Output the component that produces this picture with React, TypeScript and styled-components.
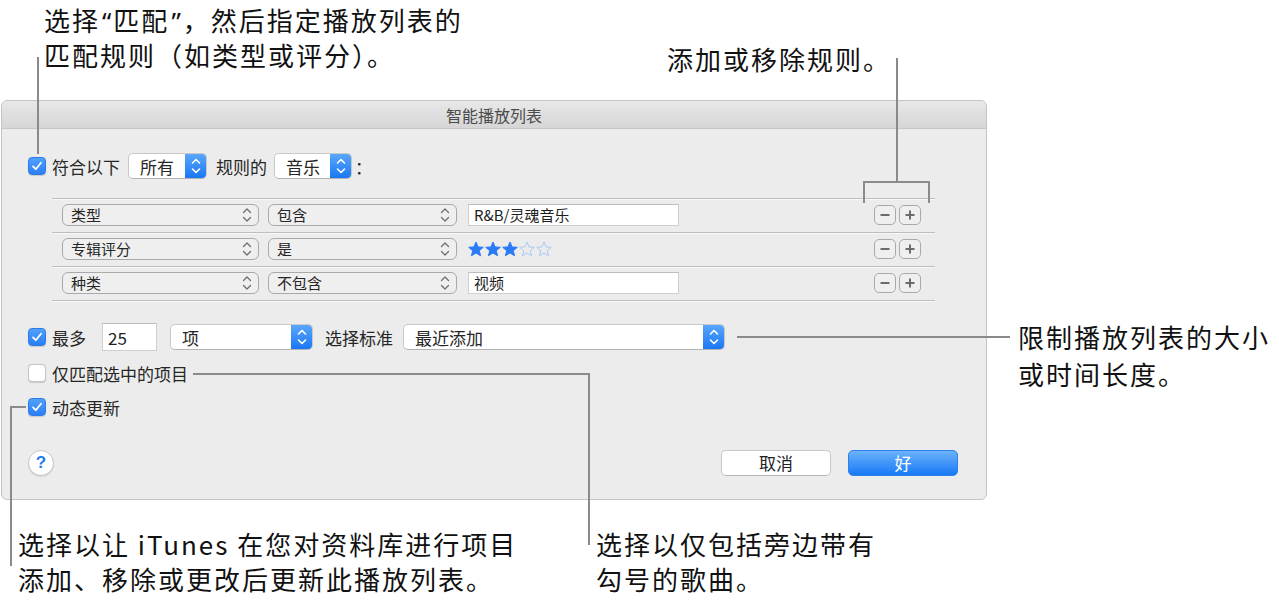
import React from "react";
import styled, { createGlobalStyle, css } from "styled-components";

const GlobalStyle = createGlobalStyle`
  html, body {
    margin: 0;
    padding: 0;
    background: #fff;
  }
  body {
    font-family: "Noto Sans CJK SC", "Noto Sans", sans-serif;
    color: #262626;
  }
`;

const Canvas = styled.div`
  position: relative;
  width: 1279px;
  height: 604px;
  overflow: hidden;
  background: #fff;
  padding: 100px 0 0 1px;
  box-sizing: border-box;
`;

const Dialog = styled.div`
  width: 986px;
  height: 400px;
  box-sizing: border-box;
  border: 1px solid #c4c4c4;
  border-radius: 6px;
  background: #ececec;
  display: flex;
  flex-direction: column;
  overflow: hidden;
`;

const TitleBar = styled.div`
  height: 28px;
  flex: none;
  box-sizing: border-box;
  border-bottom: 1px solid #c6c6c6;
  background: linear-gradient(#e8e8e8, #d6d6d6);
  display: flex;
  align-items: center;
  justify-content: center;
  font-size: 16px;
  line-height: 1;
  color: #4a4a4a;
`;

const Body = styled.div`
  flex: 1;
  display: flex;
  flex-direction: column;
  padding: 0 28px 0 26px;
`;

const Row = styled.div<{ $top: number; $h: number }>`
  display: flex;
  align-items: center;
  margin-top: ${(p) => p.$top}px;
  height: ${(p) => p.$h}px;
  flex: none;
`;

const Label = styled.span<{ $ml?: number }>`
  margin-left: ${(p) => p.$ml ?? 0}px;
  font-size: 17px;
  line-height: 1;
  white-space: nowrap;
  color: #262626;
`;

const Check = styled.span<{ $on?: boolean }>`
  width: 18px;
  height: 18px;
  flex: none;
  box-sizing: border-box;
  border-radius: 4px;
  display: inline-flex;
  align-items: center;
  justify-content: center;
  box-shadow: 0 0.5px 1px rgba(0, 0, 0, 0.15);
  ${(p) =>
    p.$on
      ? css`
          background: linear-gradient(#51a1fb, #2a7ff5);
          border: 1px solid #2d7be6;
        `
      : css`
          background: #fff;
          border: 1px solid #c6c6c6;
        `}
`;

const Popup = styled.div<{ $w: number; $ml?: number }>`
  width: ${(p) => p.$w}px;
  margin-left: ${(p) => p.$ml ?? 0}px;
  height: 26px;
  flex: none;
  box-sizing: border-box;
  background: #fff;
  border: 1px solid #c8c8c8;
  border-bottom-color: #b3b3b3;
  border-radius: 5px;
  display: flex;
  align-items: center;
  padding-left: 11px;
  font-size: 17px;
  line-height: 1;
  color: #262626;
  overflow: hidden;
`;

const Stepper = styled.span`
  margin-left: auto;
  width: 22px;
  align-self: stretch;
  margin-top: -1px;
  margin-bottom: -1px;
  margin-right: -1px;
  background: linear-gradient(#5ca8fc, #1876f3);
  display: flex;
  align-items: center;
  justify-content: center;
`;

const RuleBox = styled.div`
  margin: 19px 0 0 24px;
  width: 883px;
  flex: none;
  border-bottom: 1px solid #bdbdbd;
  box-shadow: 0 1px 0 #f8f8f8;
`;

const RuleRow = styled.div`
  height: 34px;
  box-sizing: border-box;
  border-top: 1px solid #bdbdbd;
  box-shadow: inset 0 1px 0 #f8f8f8;
  display: flex;
  align-items: center;
  padding: 0 14px 2px 10px;
`;

const RulePopup = styled.div<{ $w: number; $ml?: number }>`
  width: ${(p) => p.$w}px;
  margin-left: ${(p) => p.$ml ?? 0}px;
  height: 22px;
  flex: none;
  box-sizing: border-box;
  border: 1px solid #a9a9a9;
  border-radius: 6px;
  background: #efefef;
  display: flex;
  align-items: center;
  justify-content: space-between;
  padding: 0 6px 0 8px;
  font-size: 15px;
  line-height: 1;
  color: #262626;
`;

const Field = styled.div<{ $w: number; $h: number; $ml?: number; $fs: number }>`
  width: ${(p) => p.$w}px;
  height: ${(p) => p.$h}px;
  margin-left: ${(p) => p.$ml ?? 0}px;
  flex: none;
  box-sizing: border-box;
  background: #fff;
  border: 1px solid #cfcfcf;
  border-top-color: #bdbdbd;
  display: flex;
  align-items: center;
  padding-left: 5px;
  font-size: ${(p) => p.$fs}px;
  line-height: 1;
  color: #1e1e1e;
`;

const Stars = styled.div`
  margin-left: 11px;
  display: flex;
  gap: 1px;
`;

const Spacer = styled.div`
  flex: 1;
`;

const SmallButton = styled.span<{ $ml?: number }>`
  width: 22px;
  height: 20px;
  margin-left: ${(p) => p.$ml ?? 0}px;
  box-sizing: border-box;
  border: 1px solid #a9a9a9;
  border-radius: 5px;
  background: #efefef;
  display: inline-flex;
  align-items: center;
  justify-content: center;
`;

const HelpButton = styled.span`
  width: 26px;
  height: 26px;
  box-sizing: border-box;
  border-radius: 50%;
  border: 1px solid #c8c8c8;
  background: #fff;
  box-shadow: 0 1px 1px rgba(0, 0, 0, 0.1);
  display: inline-flex;
  align-items: center;
  justify-content: center;
  font-family: "Liberation Sans", sans-serif;
  font-size: 17px;
  font-weight: bold;
  color: #1f7bf2;
`;

const PushButton = styled.span<{ $primary?: boolean; $ml?: number }>`
  width: 110px;
  height: 26px;
  margin-left: ${(p) => p.$ml ?? 0}px;
  box-sizing: border-box;
  border-radius: 5px;
  display: inline-flex;
  align-items: center;
  justify-content: center;
  font-size: 17px;
  line-height: 1;
  ${(p) =>
    p.$primary
      ? css`
          background: linear-gradient(#6cb1fb, #177af6);
          border: 1px solid #2b80ee;
          color: #fff;
        `
      : css`
          background: #fff;
          border: 1px solid #c8c8c8;
          border-bottom-color: #b5b5b5;
          color: #222;
        `}
`;

const Note = styled.div<{ $x: number; $y: number; $lh: number }>`
  position: absolute;
  left: ${(p) => p.$x}px;
  top: ${(p) => p.$y}px;
  font-size: 26px;
  line-height: ${(p) => p.$lh}px;
  letter-spacing: 2px;
  color: #111;
  white-space: nowrap;
`;

// proportional curly quotes, as in the reference
const Quote = styled.span`
  font-family: "Noto Sans", sans-serif;
  letter-spacing: 0;
  padding: 0 2px;
`;

const Leader = styled.div<{ $x: number; $y: number; $w: number; $h: number }>`
  position: absolute;
  left: ${(p) => p.$x}px;
  top: ${(p) => p.$y}px;
  width: ${(p) => p.$w}px;
  height: ${(p) => p.$h}px;
  background: #8a8a8a;
`;

const Tick = () => (
  <svg width="12" height="12" viewBox="0 0 12 12">
    <path d="M2 6.4 L4.8 9.2 L10 2.8" fill="none" stroke="#fff" strokeWidth="1.8" strokeLinecap="round" strokeLinejoin="round" />
  </svg>
);

const BlueChevrons = () => (
  <svg width="10" height="18" viewBox="0 0 10 18">
    <path d="M1.5 6 L5 2.5 L8.5 6 M1.5 12 L5 15.5 L8.5 12" fill="none" stroke="#fff" strokeWidth="1.6" strokeLinecap="round" strokeLinejoin="round" />
  </svg>
);

const GrayChevrons = () => (
  <svg width="10" height="16" viewBox="0 0 10 16">
    <path d="M1.5 5.5 L5 2 L8.5 5.5 M1.5 10.5 L5 14 L8.5 10.5" fill="none" stroke="#6e6e6e" strokeWidth="1.3" strokeLinecap="round" strokeLinejoin="round" />
  </svg>
);

const Star = ({ filled }: { filled: boolean }) => (
  <svg width="16" height="16" viewBox="0 0 16 16">
    <polygon
      points="8,1 10.1,5.9 15.3,6.3 11.3,9.7 12.6,14.8 8,12 3.4,14.8 4.7,9.7 0.7,6.3 5.9,5.9"
      fill={filled ? "#2b7bf6" : "none"}
      stroke={filled ? "#2b7bf6" : "#a9c8f4"}
      strokeWidth="1"
      strokeLinejoin="round"
    />
  </svg>
);

const MinusPlus = () => (
  <>
    <SmallButton>
      <svg width="12" height="12" viewBox="0 0 12 12">
        <path d="M1.5 6 H10.5" stroke="#6b6b6b" strokeWidth="2" />
      </svg>
    </SmallButton>
    <SmallButton $ml={3}>
      <svg width="12" height="12" viewBox="0 0 12 12">
        <path d="M1.5 6 H10.5 M6 1.5 V10.5" stroke="#6b6b6b" strokeWidth="2" />
      </svg>
    </SmallButton>
  </>
);

const rules = [
  { field: "类型", op: "包含", value: "R&B/灵魂音乐" },
  { field: "专辑评分", op: "是", rating: 3 },
  { field: "种类", op: "不包含", value: "视频" },
];

export default function App() {
  return (
    <>
      <GlobalStyle />
      <Canvas>
        <Dialog>
          <TitleBar>智能播放列表</TitleBar>
          <Body>
            <Row $top={24} $h={26}>
              <Check $on>
                <Tick />
              </Check>
              <Label $ml={6}>符合以下</Label>
              <Popup $w={79} $ml={8}>
                所有
                <Stepper>
                  <BlueChevrons />
                </Stepper>
              </Popup>
              <Label $ml={9}>规则的</Label>
              <Popup $w={78} $ml={7}>
                音乐
                <Stepper>
                  <BlueChevrons />
                </Stepper>
              </Popup>
              <Label $ml={3}>：</Label>
            </Row>

            <RuleBox>
              {rules.map((r) => (
                <RuleRow key={r.field}>
                  <RulePopup $w={197}>
                    {r.field}
                    <GrayChevrons />
                  </RulePopup>
                  <RulePopup $w={189} $ml={9}>
                    {r.op}
                    <GrayChevrons />
                  </RulePopup>
                  {r.rating !== undefined ? (
                    <Stars>
                      {[0, 1, 2, 3, 4].map((i) => (
                        <Star key={i} filled={i < r.rating!} />
                      ))}
                    </Stars>
                  ) : (
                    <Field $w={211} $h={22} $ml={11} $fs={15}>
                      {r.value}
                    </Field>
                  )}
                  <Spacer />
                  <MinusPlus />
                </RuleRow>
              ))}
            </RuleBox>

            <Row $top={22} $h={28}>
              <Check $on>
                <Tick />
              </Check>
              <Label $ml={6}>最多</Label>
              <Field $w={55} $h={28} $ml={16} $fs={17}>
                25
              </Field>
              <Popup $w={143} $ml={13}>
                项
                <Stepper>
                  <BlueChevrons />
                </Stepper>
              </Popup>
              <Label $ml={12}>选择标准</Label>
              <Popup $w={322} $ml={10}>
                最近添加
                <Stepper>
                  <BlueChevrons />
                </Stepper>
              </Popup>
            </Row>

            <Row $top={12} $h={20}>
              <Check />
              <Label $ml={6}>仅匹配选中的项目</Label>
            </Row>

            <Row $top={14} $h={20}>
              <Check $on>
                <Tick />
              </Check>
              <Label $ml={6}>动态更新</Label>
            </Row>

            <Row $top={32} $h={27}>
              <HelpButton>?</HelpButton>
              <Spacer />
              <PushButton>取消</PushButton>
              <PushButton $primary $ml={17}>
                好
              </PushButton>
            </Row>
          </Body>
        </Dialog>

        <Note $x={44} $y={3} $lh={34}>
          选择<Quote>“</Quote>匹配<Quote>”</Quote>，然后指定播放列表的
          <br />
          匹配规则（如类型或评分）。
        </Note>
        <Leader $x={37} $y={57} $w={2} $h={97} />

        <Note $x={667} $y={41} $lh={36}>
          添加或移除规则。
        </Note>
        <Leader $x={896} $y={58} $w={2} $h={124} />
        <Leader $x={863} $y={181} $w={67} $h={2} />
        <Leader $x={863} $y={181} $w={2} $h={22} />
        <Leader $x={928} $y={181} $w={2} $h={22} />

        <Leader $x={737} $y={336} $w={273} $h={2} />
        <Note $x={1018} $y={318} $lh={37}>
          限制播放列表的大小
          <br />
          或时间长度。
        </Note>

        <Leader $x={193} $y={373} $w={397} $h={2} />
        <Leader $x={588} $y={373} $w={2} $h={172} />
        <Note $x={596} $y={526} $lh={35}>
          选择以仅包括旁边带有
          <br />
          勾号的歌曲。
        </Note>

        <Leader $x={10} $y={406} $w={16} $h={2} />
        <Leader $x={10} $y={406} $w={2} $h={160} />
        <Note $x={18} $y={526} $lh={35}>
          选择以让 iTunes 在您对资料库进行项目
          <br />
          添加、移除或更改后更新此播放列表。
        </Note>
      </Canvas>
    </>
  );
}
